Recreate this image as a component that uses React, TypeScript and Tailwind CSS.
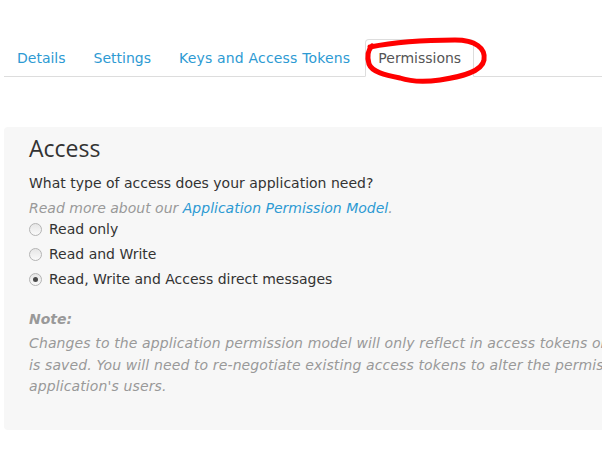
import React from "react";

const tabs = ["Details", "Settings", "Keys and Access Tokens", "Permissions"];

function Radio({ label, checked }: { label: string; checked?: boolean }) {
  return (
    <label className="flex items-center h-5 text-[14px] leading-5 text-[#333]">
      <span className="relative w-[13px] h-[13px] rounded-full border border-[#b4b4b4] bg-gradient-to-b from-[#e6e6e6] to-[#fafafa] mr-[7px] flex items-center justify-center">
        {checked && <span className="w-[5px] h-[5px] rounded-full bg-[#4a4a4a]" />}
      </span>
      {label}
    </label>
  );
}

export default function App() {
  return (
    <div className="relative w-[602px] h-[463px] overflow-hidden bg-white font-['DejaVu_Sans',sans-serif]">
      <div className="w-[940px] ml-[4px]">
        <ul className="flex mt-[39px] border-b border-[#dddddd]">
          {tabs.map((t) => {
            const active = t === "Permissions";
            return (
              <li key={t} className="-mb-px mr-[2px]">
                <a
                  className={
                    active
                      ? "block px-3 py-2 text-[14px] leading-5 text-[#555] bg-white border border-[#dddddd] border-b-white rounded-t"
                      : t === "Keys and Access Tokens"
                        ? "block px-3 py-2 text-[14px] leading-5 tracking-[0.18px] text-[#2d9ad3] border border-transparent"
                        : "block px-3 py-2 text-[14px] leading-5 text-[#2d9ad3] border border-transparent"
                  }
                >
                  {t}
                </a>
              </li>
            );
          })}
        </ul>

        <div className="mt-[50px] bg-[#f7f7f7] rounded pl-[25px] pt-[6px] pb-[32px]">
          <h2 className="text-[23px] leading-[30px] text-[#333] font-['Open_Sans',sans-serif]">Access</h2>
          <p className="mt-[10px] text-[14px] leading-5 text-[#333]">What type of access does your application need?</p>
          <p className="mt-[5px] text-[14px] leading-5 italic text-[#999]">
            Read more about our <a className="text-[#2d9ad3]">Application Permission Model</a>.
          </p>
          <div className="mt-[1px] flex flex-col gap-[5px]">
            <Radio label="Read only" />
            <Radio label="Read and Write" />
            <Radio label="Read, Write and Access direct messages" checked />
          </div>
          <p className="mt-[20px] text-[14px] leading-5 italic font-bold text-[#999]">Note:</p>
          <p className="mt-[4px] text-[14px] leading-[21.5px] italic tracking-[0.12px] text-[#999] whitespace-nowrap">
            Changes to the application permission model will only reflect in access tokens obtained after the permission model change
            <br />
            is saved. You will need to re-negotiate existing access tokens to alter the permission level associated with each of your
            <br />
            application's users.
          </p>
        </div>
      </div>

      <svg className="absolute left-0 top-0 pointer-events-none" width="602" height="463">
        <path
          d="M 370 47 C 395 42, 430 40, 455 40 C 475 40, 486 48, 484 60 C 482 72, 460 77, 440 80 C 425 82, 412 82, 400 78 C 385 75, 372 72, 369 64 C 367 57, 368 50, 372 46"
          fill="none"
          stroke="#ff0000"
          strokeWidth="5"
          strokeLinecap="round"
          strokeLinejoin="round"
        />
      </svg>
    </div>
  );
}
